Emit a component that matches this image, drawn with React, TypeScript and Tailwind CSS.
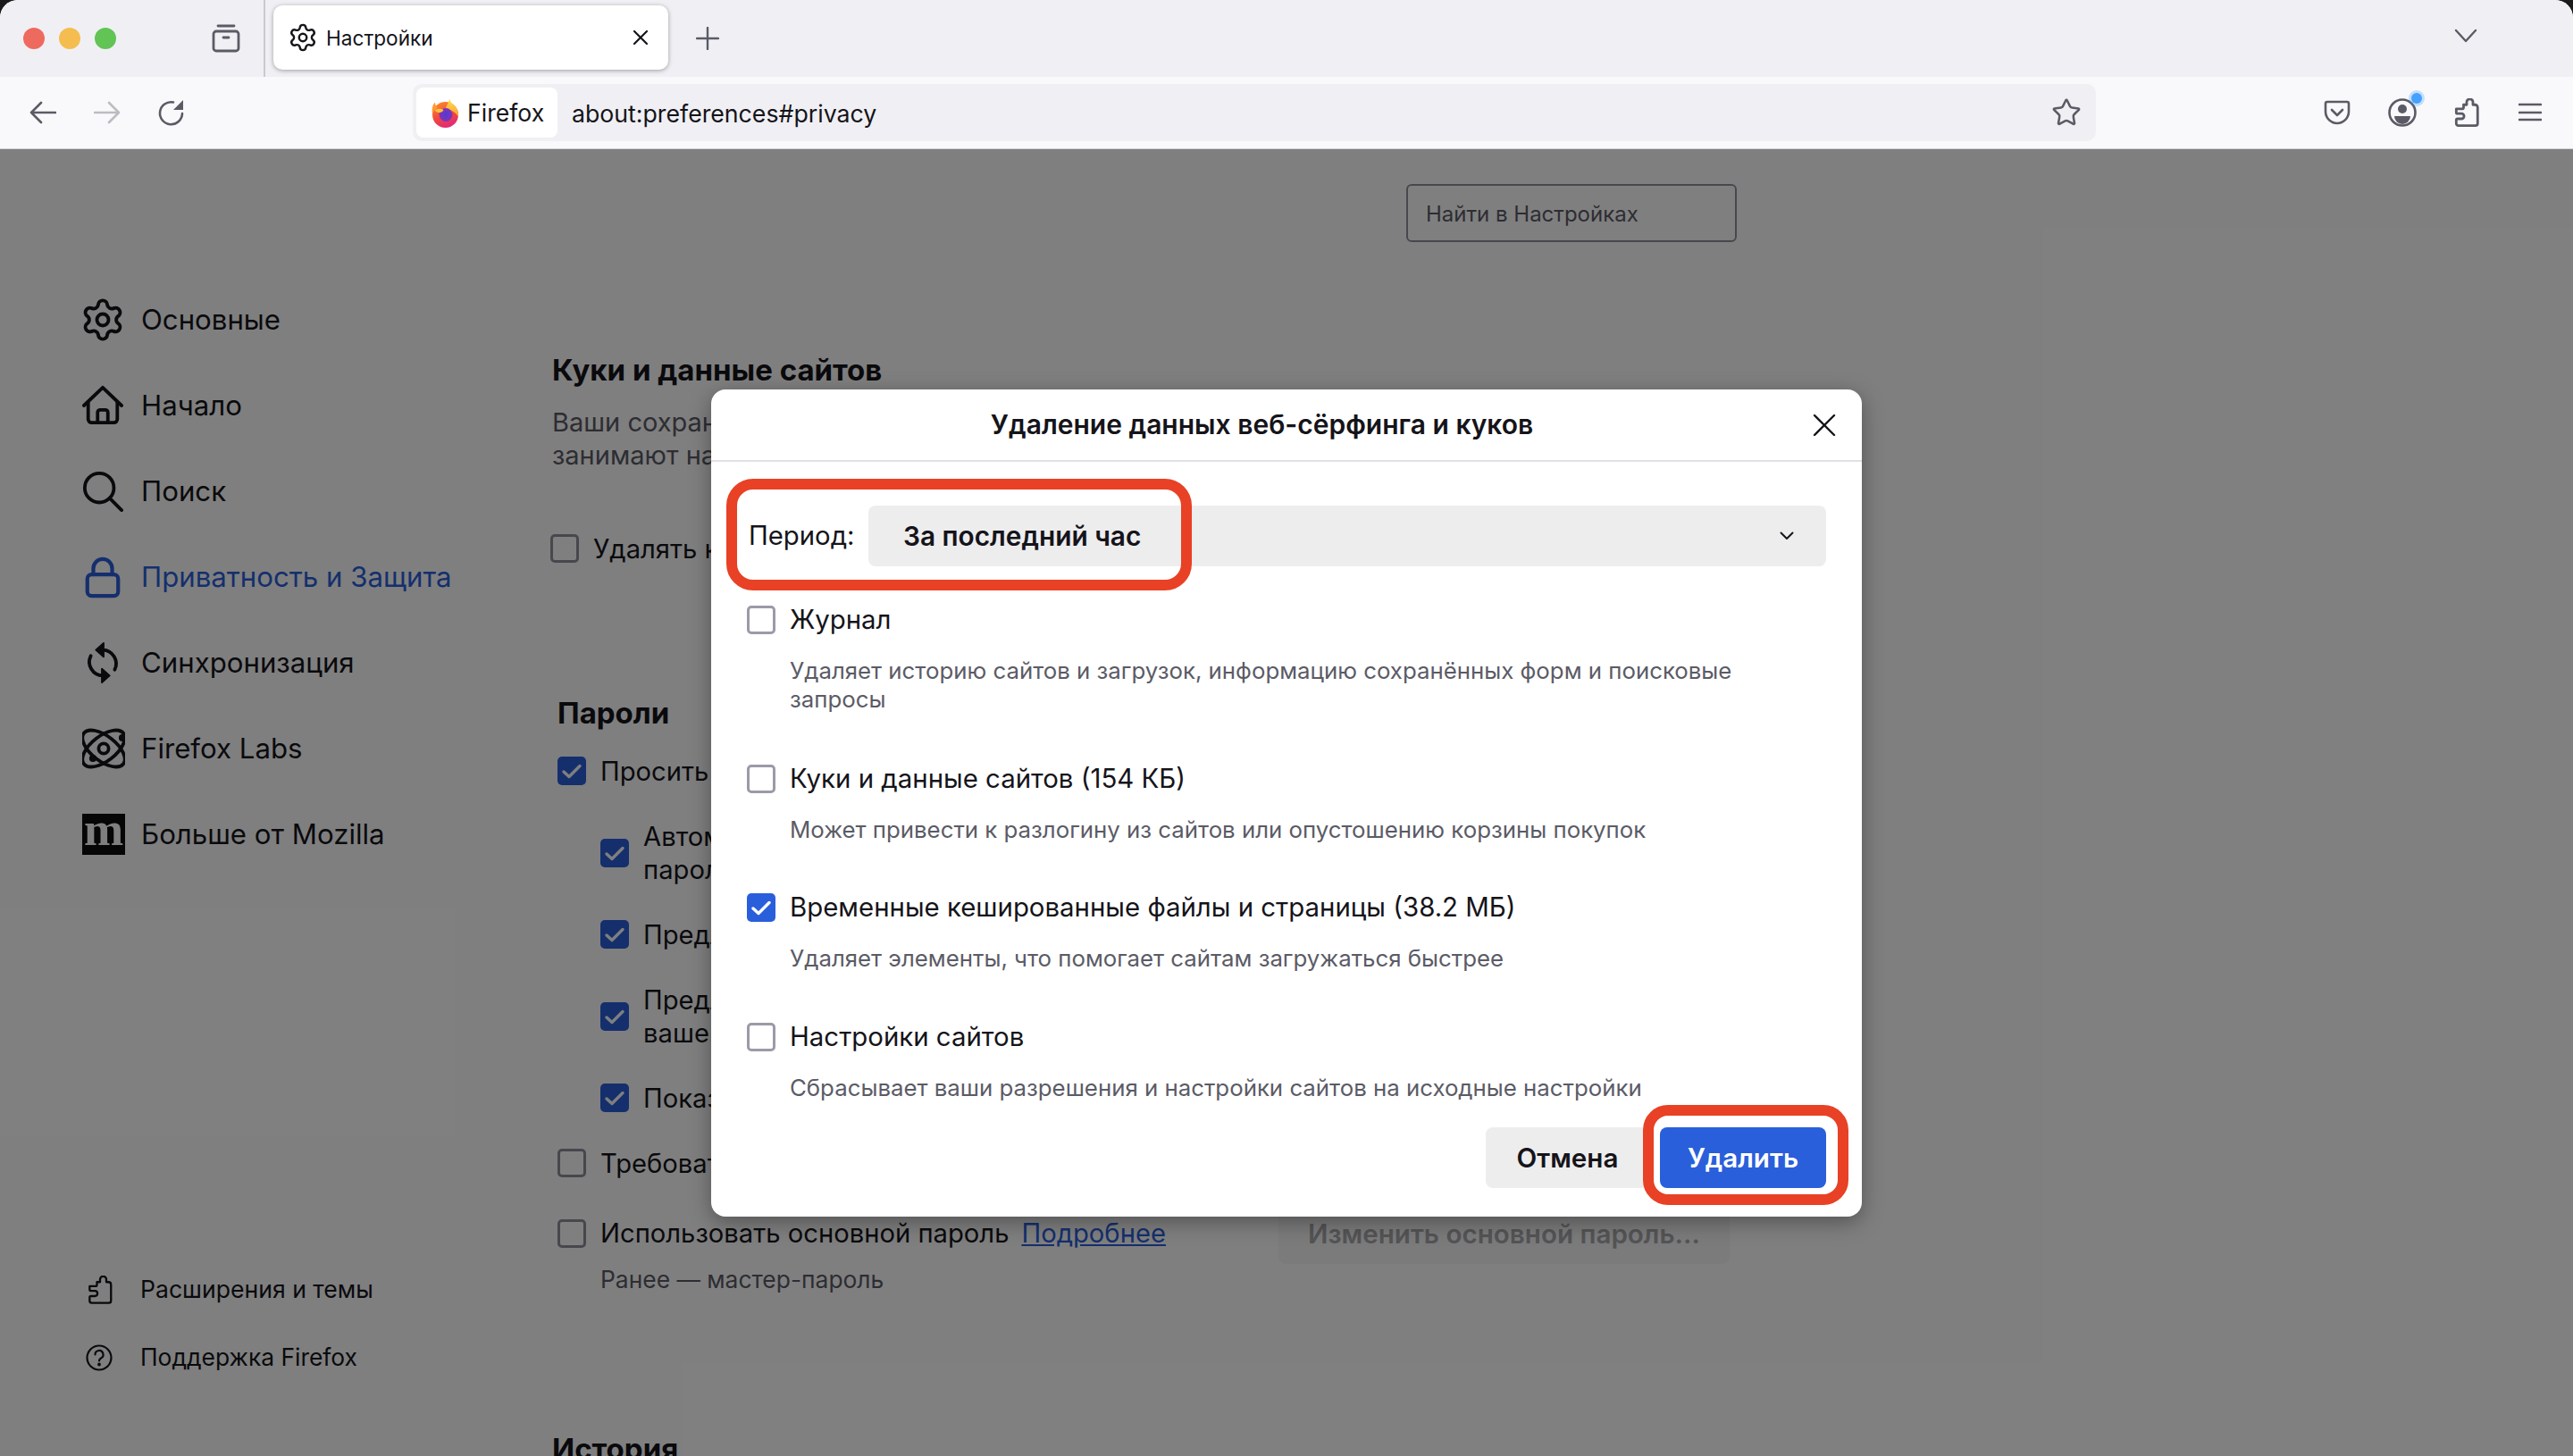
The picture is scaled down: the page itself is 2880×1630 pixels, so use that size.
import React from "react";

const stroke = { fill: "none", stroke: "currentColor", strokeLinecap: "round" as const, strokeLinejoin: "round" as const };

function Gear({ s = 52, w = 1.8 }: { s?: number; w?: number }) {
  return (
    <svg width={s} height={s} viewBox="0 0 24 24" {...stroke} strokeWidth={w}>
      <path d="M9.671 4.136a2.34 2.34 0 0 1 4.659 0 2.34 2.34 0 0 0 3.319 1.915 2.34 2.34 0 0 1 2.33 4.033 2.34 2.34 0 0 0 0 3.831 2.34 2.34 0 0 1-2.33 4.033 2.34 2.34 0 0 0-3.319 1.915 2.34 2.34 0 0 1-4.659 0 2.34 2.34 0 0 0-3.32-1.915 2.34 2.34 0 0 1-2.33-4.033 2.34 2.34 0 0 0 0-3.831A2.34 2.34 0 0 1 6.35 6.051a2.34 2.34 0 0 0 3.319-1.915" />
      <circle cx="12" cy="12" r="3" />
    </svg>
  );
}
function HomeIcon() {
  return (
    <svg width="46" height="46" viewBox="0 0 24 24" {...stroke} strokeWidth={2}>
      <path d="M1 12 12 1.500 23 12" />
      <path d="M3.500 10v10a2 2 0 0 0 2 2h13a2 2 0 0 0 2-2V10" />
      <path d="M9 22v-6a1.500 1.500 0 0 1 1.500-1.500h3A1.500 1.500 0 0 1 15 16v6" />
    </svg>
  );
}
function SearchIcon() {
  return (
    <svg width="46" height="46" viewBox="0 0 24 24" {...stroke} strokeWidth={2}>
      <circle cx="10" cy="10" r="8.500" />
      <path d="m16 16 7 7" />
    </svg>
  );
}
function LockIcon() {
  return (
    <svg width="46" height="50" viewBox="0 0 24 26" {...stroke} strokeWidth={2.200}>
      <rect x="3" y="11.500" width="18" height="12.500" rx="2.500" />
      <path d="M6.500 11.500V8a5.500 5.500 0 0 1 11 0v3.500" />
    </svg>
  );
}
function SyncIcon() {
  return (
    <svg width="46" height="50" viewBox="0 0 24 26" {...stroke} strokeWidth={2}>
      <path d="M12 5.500a8 8 0 0 1 7 11.500" />
      <path d="M12 20.500A8 8 0 0 1 5 9" />
      <path d="M12.500 1.500v8L8 5.500Z" fill="currentColor" strokeWidth={1} />
      <path d="M11.500 24.500v-8l4.500 4Z" fill="currentColor" strokeWidth={1} />
    </svg>
  );
}
function LabsIcon() {
  return (
    <svg width="48" height="48" viewBox="0 0 24 24" {...stroke} strokeWidth={1.900}>
      <ellipse cx="12" cy="12" rx="14" ry="7" transform="rotate(38 12 12)" />
      <ellipse cx="12" cy="12" rx="14" ry="7" transform="rotate(-38 12 12)" />
      <circle cx="12" cy="12" r="2.800" />
      <circle cx="22.500" cy="6" r="1.100" fill="currentColor" />
      <circle cx="6" cy="17.500" r="1.100" fill="currentColor" />
    </svg>
  );
}
function Puzzle({ s = 30, w = 2 }: { s?: number; w?: number }) {
  return (
    <svg width={s} height={s + 4} viewBox="0 0 24 27" {...stroke} strokeWidth={w}>
      <path d="M9 6h3V3.500a3 3 0 0 1 6 0V6h2a2.500 2.500 0 0 1 2.500 2.500V24a2 2 0 0 1-2 2H4a2 2 0 0 1-2-2v-3.500a1 1 0 0 1 1-1h4a2.500 2.500 0 0 0 0-5H3a1 1 0 0 1-1-1V10h5.500A1.500 1.500 0 0 0 9 8.500Z" />
    </svg>
  );
}
function Firefox() {
  return (
    <svg width="31" height="33" viewBox="0 0 31 33">
      <defs>
        <linearGradient id="ff" x1="0.2" y1="0" x2="0.6" y2="1">
          <stop offset="0" stopColor="#ff8a2a" />
          <stop offset="0.55" stopColor="#f0483c" />
          <stop offset="1" stopColor="#e0287a" />
        </linearGradient>
        <linearGradient id="fy" x1="0" y1="0" x2="0" y2="1">
          <stop offset="0" stopColor="#ffe24a" />
          <stop offset="1" stopColor="#ffa02c" />
        </linearGradient>
        <radialGradient id="fp">
          <stop offset="0" stopColor="#4a3fd0" />
          <stop offset="1" stopColor="#8a2fb8" />
        </radialGradient>
      </defs>
      <circle cx="15.500" cy="18.500" r="14.500" fill="url(#ff)" />
      <path d="M20 0c1 5 4 6 7 10 2.500 3.500 3.500 7 3 11-3-5-7-8-14-9 0-4 4-7 4-12Z" fill="url(#fy)" />
      <path d="M4 4.500c0 3 1 4.500 3 6-3 1.500-5 4-6 7-1-5 0-10 3-13Z" fill="#ff9a2e" />
      <circle cx="16" cy="18.500" r="7.500" fill="url(#fp)" />
      <path d="M3.500 13.500c3-2 7-2.500 10-.5-1 2.500-3.500 3.500-6.500 2.800-1.500-.4-2.500-1.300-3.500-2.300Z" fill="#ffc23a" />
    </svg>
  );
}

function Check({ on, muted }: { on?: boolean; muted?: boolean }) {
  return on ? (
    <span className="flex h-8 w-8 shrink-0 items-center justify-center rounded-[5px] bg-[#2a5fdb]">
      <svg width="24" height="24" viewBox="0 0 24 24" fill="none" stroke="white" strokeWidth="3.400" strokeLinecap="round" strokeLinejoin="round">
        <path d="m3 13 6 5.500L21 6.500" />
      </svg>
    </span>
  ) : (
    <span className={`h-8 w-8 shrink-0 rounded-[5px] border-[3px] bg-white ${muted ? "border-[#9a9aa8]" : "border-[#8f8f9d]"}`} />
  );
}

function NavRow({ icon, label, active }: { icon: React.ReactNode; label: string; active?: boolean }) {
  return (
    <div className={`flex h-[96px] items-center text-[31.2px] ${active ? "text-[#2a5fdb]" : "text-[#15141a]"}`}>
      <span className="flex w-[66px] shrink-0 items-center justify-start">{icon}</span>
      <span>{label}</span>
    </div>
  );
}

function PageCheck({ on, label, label2, className = "" }: { on?: boolean; label: React.ReactNode; label2?: string; className?: string }) {
  return (
    <div className={`flex h-[32px] items-center ${className}`}>
      <Check on={on} />
      <span className="ml-[16px] text-[29.2px] leading-[37px] text-[#15141a]">
        {label}
        {label2 && <br />}
        {label2}
      </span>
    </div>
  );
}

function DialogOption({ on, label, desc, className }: { on?: boolean; label: string; desc: React.ReactNode; className: string }) {
  return (
    <div className={`pl-[40px] ${className}`}>
      <div className="flex h-8 items-center">
        <Check on={on} muted />
        <span className="ml-[16px] text-[29.4px] text-[#15141a]">{label}</span>
      </div>
      <p className="mt-[25px] pl-[48px] text-[25.8px] leading-[32px] text-[#5b5b66]">{desc}</p>
    </div>
  );
}

export default function App() {
  return (
    <div className="relative h-[1630px] w-[2880px] overflow-hidden bg-[#1a1a1a] font-['Inter',sans-serif]">
      <div className="flex h-full flex-col overflow-hidden rounded-t-[20px] bg-white">
        {/* Tab strip */}
        <div className="flex h-[86px] shrink-0 items-stretch bg-[#f0f0f4]">
          <div className="flex items-center gap-4 pl-[26px]">
            <span className="h-6 w-6 rounded-full bg-[#ee6a5e]" />
            <span className="h-6 w-6 rounded-full bg-[#f5bd4f]" />
            <span className="h-6 w-6 rounded-full bg-[#61c454]" />
          </div>
          <div className="ml-[106px] flex items-center text-[#5b5b66]">
            <svg width="34" height="32" viewBox="0 0 34 32" {...stroke} strokeWidth="2.800">
              <path d="M8 2h18" />
              <rect x="3" y="8" width="28" height="22" rx="3" />
              <path d="M14 15h6" />
            </svg>
          </div>
          <div className="ml-[25px] w-[2px] bg-[#c9c9cf]" />
          <div className="ml-[9px] mt-[6px] flex h-[72px] w-[442px] items-center rounded-[10px] bg-white pl-[16px] shadow-[0_1px_5px_rgba(0,0,0,0.35)]">
            <span className="text-[#15141a]"><Gear s={34} w={1.700} /></span>
            <span className="ml-[9px] pt-[2px] text-[22.6px] text-[#15141a]">Настройки</span>
            <svg className="ml-auto mr-[22px] text-[#15141a]" width="18" height="18" viewBox="0 0 18 18" {...stroke} strokeWidth="2.200">
              <path d="m2 2 14 14M16 2 2 16" />
            </svg>
          </div>
          <div className="ml-[31px] flex items-center text-[#5b5b66]">
            <svg width="26" height="26" viewBox="0 0 26 26" {...stroke} strokeWidth="2.400">
              <path d="M13 1v24M1 13h24" />
            </svg>
          </div>
          <div className="ml-auto mr-[107px] flex items-center pb-[6px] text-[#5b5b66]">
            <svg width="26" height="16" viewBox="0 0 26 16" {...stroke} strokeWidth="2.400">
              <path d="m2 2 11 12L24 2" />
            </svg>
          </div>
        </div>

        {/* Toolbar */}
        <div className="flex h-[81px] shrink-0 items-center border-b-[1px] border-[#d5d5da] bg-[#f9f9fb]">
          <div className="flex w-[462px] items-center pl-[33px] text-[#5b5b66]">
            <svg width="30" height="26" viewBox="0 0 30 26" {...stroke} strokeWidth="2.600">
              <path d="M29 13H2M13 2 2 13l11 11" />
            </svg>
            <svg className="ml-[42px] text-[#bcbcc2]" width="30" height="26" viewBox="0 0 30 26" {...stroke} strokeWidth="2.600">
              <path d="M1 13h27M17 2l11 11-11 11" />
            </svg>
            <svg className="ml-[42px]" width="30" height="30" viewBox="0 0 30 30" {...stroke} strokeWidth="2.600">
              <path d="M27 16A12.500 12.500 0 1 1 17 3.500" />
              <path d="M28 1v11H17Z" fill="currentColor" stroke="none" />
            </svg>
          </div>
          <div className="flex h-[64px] w-[1884px] items-center rounded-[10px] bg-[#f0f0f4] pl-[4px] pr-[16px]">
            <div className="flex h-[56px] w-[158px] items-center rounded-[8px] bg-white pl-[17px]">
              <Firefox />
              <span className="ml-[9px] pt-[2px] text-[26.6px] text-[#15141a]">Firefox</span>
            </div>
            <span className="ml-[16px] pt-[2px] text-[26.7px] text-[#15141a]">about:preferences#privacy</span>
            <svg className="ml-auto text-[#5b5b66]" width="34" height="34" viewBox="0 0 24 24" {...stroke} strokeWidth="1.800">
              <path d="M11.525 2.295a.53.53 0 0 1 .95 0l2.310 4.679a2.123 2.123 0 0 0 1.595 1.160l5.166.756a.53.53 0 0 1 .294.904l-3.736 3.638a2.123 2.123 0 0 0-.611 1.878l.882 5.140a.53.53 0 0 1-.771.560l-4.618-2.428a2.122 2.122 0 0 0-1.973 0L6.396 21.010a.53.53 0 0 1-.770-.560l.881-5.139a2.122 2.122 0 0 0-.611-1.879L2.160 9.795a.53.53 0 0 1 .294-.906l5.165-.755a2.122 2.122 0 0 0 1.597-1.160z" />
            </svg>
          </div>
          <div className="flex flex-1 items-center text-[#5b5b66]">
            <svg className="ml-[255px]" width="30" height="28" viewBox="0 0 30 28" {...stroke} strokeWidth="2.600">
              <path d="M4 2h22a2 2 0 0 1 2 2v9c0 7-6 13-13 13S2 20 2 13V4a2 2 0 0 1 2-2Z" />
              <path d="m9 11 6 6 6-6" />
            </svg>
            <span className="relative ml-[42px] block h-[32px] w-[32px]">
              <svg width="32" height="32" viewBox="0 0 32 32" {...stroke} strokeWidth="2.600">
                <circle cx="16" cy="16" r="14.500" />
                <circle cx="16" cy="12" r="5" fill="currentColor" stroke="none" />
                <path d="M7 20h18a9 9 0 0 1-18 0Z" fill="currentColor" stroke="none" />
              </svg>
              <span className="absolute -right-[6px] -top-[6px] h-[12px] w-[12px] rounded-full bg-[#45a1ff] shadow-[0_0_0_3px_rgba(69,161,255,0.3)]" />
            </span>
            <span className="ml-[42px]"><Puzzle s={28} w={2.400} /></span>
            <svg className="ml-[44px]" width="26" height="22" viewBox="0 0 26 22" {...stroke} strokeWidth="2.600">
              <path d="M1 2h24M1 11h24M1 19h24" />
            </svg>
          </div>
        </div>

        {/* Preferences page */}
        <div className="relative flex min-h-0 flex-1 items-start">
          <nav className="w-[618px] shrink-0 pl-[92px] pt-[143px]">
            <NavRow icon={<span className="-ml-[3px]"><Gear /></span>} label="Основные" />
            <NavRow icon={<HomeIcon />} label="Начало" />
            <NavRow icon={<SearchIcon />} label="Поиск" />
            <NavRow icon={<LockIcon />} label="Приватность и Защита" active />
            <NavRow icon={<SyncIcon />} label="Синхронизация" />
            <NavRow icon={<LabsIcon />} label="Firefox Labs" />
            <NavRow
              icon={
                <span className="flex h-[46px] w-[48px] items-center justify-center bg-[#0c0c0d] font-['Liberation_Serif',serif] text-[53px] font-bold leading-[46px] text-white">
                  <span className="-translate-y-[6px]">m</span>
                </span>
              }
              label="Больше от Mozilla"
            />
            <div className="mt-[424px] flex h-[76px] items-center pl-[6px] text-[26.6px] text-[#15141a]">
              <span className="w-[59px]"><Puzzle s={28} w={2} /></span>
              <span>Расширения и темы</span>
            </div>
            <div className="flex h-[76px] items-center pl-[4px] text-[26.4px] text-[#15141a]">
              <svg className="mr-[31px]" width="30" height="30" viewBox="0 0 30 30" {...stroke} strokeWidth="2.200">
                <circle cx="15" cy="15" r="13.500" />
                <path d="M10.500 11.500a4.500 4.500 0 1 1 6.500 4c-1.500.8-2 1.500-2 3" />
                <circle cx="15" cy="22.500" r="0.800" fill="currentColor" />
              </svg>
              <span>Поддержка Firefox</span>
            </div>
          </nav>

          <main className="w-[1330px] pt-[39px]">
            <div className="ml-[956px] flex h-[65px] w-[370px] items-center rounded-[6px] border-2 border-[#8f8f9d] pl-[20px] pt-[2px] text-[24px] text-[#5b5b66]">
              Найти в Настройках
            </div>
            <h2 className="mt-[121px] text-[33px] font-bold leading-[44px] text-[#15141a]">Куки и данные сайтов</h2>
            <p className="mt-[18px] w-[1300px] text-[29px] leading-[37px] text-[#5b5b66]">
              Ваши сохранённые куки, данные сайтов и кеш сейчас
              <br />
              занимают на диске 154 КБ.
            </p>
            <PageCheck className="ml-[-2px] mt-[70px]" label="Удалять куки и данные сайтов при закрытии Firefox" />
            <h2 className="ml-[6px] mt-[146px] text-[33px] font-bold leading-[44px] text-[#15141a]">Пароли</h2>
            <div className="ml-[6px]">
              <PageCheck on className="mt-[27px]" label="Просить сохранять пароли" />
              <div className="ml-[48px]">
                <PageCheck on className="mt-[60px]" label="Автоматически заполнять логины и" label2="пароли" />
                <PageCheck on className="mt-[59px]" label="Предлагать надёжные пароли" />
                <PageCheck on className="mt-[60px]" label="Предлагать Firefox Relay для защиты" label2="вашего адреса" />
                <PageCheck on className="mt-[59px]" label="Показывать уведомления о паролях" />
              </div>
              <PageCheck className="mt-[41px]" label="Требовать вход устройства" />
              <div className="mt-[47px] flex h-[32px] items-center">
                <Check />
                <span className="ml-[16px] text-[29.2px] text-[#15141a]">Использовать основной пароль</span>
                <span className="ml-[14px] text-[29.2px] text-[#2a5fdb] underline">Подробнее</span>
                <span className="ml-[126px] flex h-[68px] w-[505px] shrink-0 items-center justify-center rounded-[8px] bg-[#f7f7f9] text-[29.6px] font-semibold text-[#a8a8ab]">
                  Изменить основной пароль...
                </span>
              </div>
              <p className="ml-[48px] mt-[17px] text-[26.4px] leading-[36px] text-[#5b5b66]">Ранее — мастер-пароль</p>
            </div>
            <h2 className="mt-[150px] text-[33px] font-bold leading-[44px] text-[#15141a]">История</h2>
          </main>

          {/* Dim layer over the page */}
          <div className="absolute inset-0 bg-black/50" />
        </div>
      </div>

      {/* Dialog */}
      <div className="absolute left-[796px] top-[436px] h-[926px] w-[1288px] rounded-[16px] bg-white shadow-[0_6px_24px_rgba(0,0,0,0.35)]">
        <div className="flex h-[81px] items-center border-b-2 border-[#e0e0e6] pr-[29px]">
          <h1 className="flex-1 text-center text-[30px] font-semibold text-[#15141a]">Удаление данных веб-сёрфинга и куков</h1>
          <svg className="text-[#15141a]" width="26" height="26" viewBox="0 0 26 26" {...stroke} strokeWidth="2.400">
            <path d="m2 2 22 22M24 2 2 24" />
          </svg>
        </div>
        <div className="mt-[49px] flex h-[68px] items-center pl-[42px] pr-[40px]">
          <span className="w-[134px] text-[29.3px] text-[#15141a]">Период:</span>
          <div className="flex h-[68px] flex-1 items-center justify-between rounded-[8px] bg-[#ededee] pl-[39px] pr-[36px]">
            <span className="text-[29.8px] font-semibold text-[#15141a]">За последний час</span>
            <svg className="text-[#15141a]" width="16" height="10" viewBox="0 0 16 10" {...stroke} strokeWidth="2">
              <path d="m1.500 1.500 6.500 6.500 6.500-6.500" />
            </svg>
          </div>
        </div>
        <DialogOption
          className="mt-[44px]"
          label="Журнал"
          desc={
            <>
              Удаляет историю сайтов и загрузок, информацию сохранённых форм и поисковые
              <br />
              запросы
            </>
          }
        />
        <DialogOption className="mt-[57px]" label="Куки и данные сайтов (154 КБ)" desc="Может привести к разлогину из сайтов или опустошению корзины покупок" />
        <DialogOption className="mt-[55px]" on label="Временные кешированные файлы и страницы (38.2 МБ)" desc="Удаляет элементы, что помогает сайтам загружаться быстрее" />
        <DialogOption className="mt-[56px]" label="Настройки сайтов" desc="Сбрасывает ваши разрешения и настройки сайтов на исходные настройки" />
        <div className="mt-[28px] flex justify-end gap-[12px] pr-[40px]">
          <button className="h-[68px] w-[183px] rounded-[8px] bg-[#ededee] text-[29.6px] font-semibold text-[#15141a]">Отмена</button>
          <button className="h-[68px] w-[186px] rounded-[8px] bg-[#2a5fdb] text-[29.6px] font-semibold text-white">Удалить</button>
        </div>
      </div>

      {/* Red callouts drawn on top of the screenshot */}
      <div className="absolute left-[813px] top-[536px] h-[125px] w-[521px] rounded-[30px] border-[12px] border-[#e84125]" />
      <div className="absolute left-[1839px] top-[1237px] h-[112px] w-[230px] rounded-[28px] border-[12px] border-[#e84125]" />
    </div>
  );
}
